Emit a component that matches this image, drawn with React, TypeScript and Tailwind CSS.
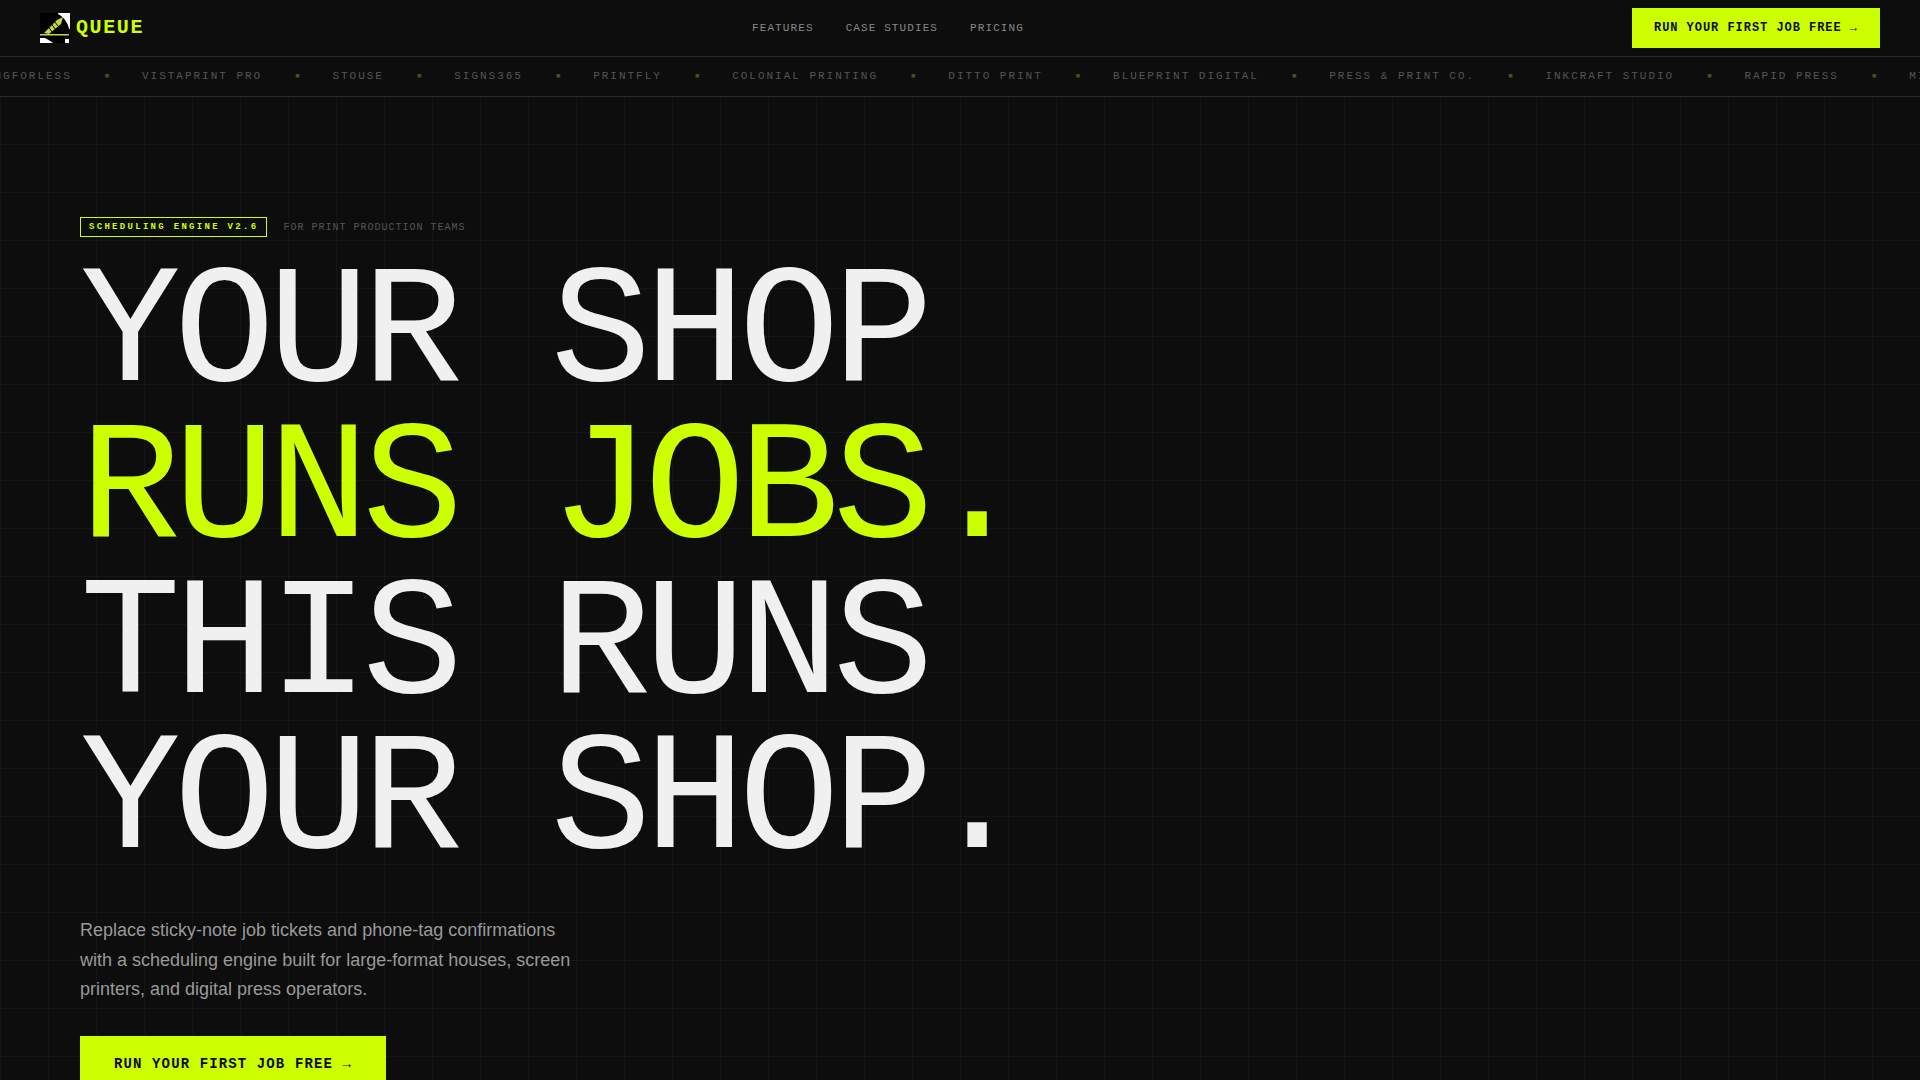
const mono = "font-['Liberation_Mono',monospace]";
const brands = ["PRINTINGFORLESS","VISTAPRINT PRO","STOUSE","SIGNS365","PRINTFLY","COLONIAL PRINTING","DITTO PRINT","BLUEPRINT DIGITAL","PRESS & PRINT CO.","INKCRAFT STUDIO","RAPID PRESS","MINUTEMAN"];

function Logo() {
  return (
    <svg width="30" height="30" viewBox="0 0 30 30" className="shrink-0">
      <rect width="30" height="30" fill="#000" />
      <path d="M18 0H30V16H29C28 10 24 4 18 1Z" fill="#fff" />
      <path d="M0 25H5C8 27 11 28 13 30H0Z" fill="#fff" />
      <rect x="25" y="26" width="4" height="4" fill="#fff" />
      <rect x="0" y="21" width="29" height="1.5" fill="#c4d83c" />
      <path d="M4 20L17 7L23 4L21 11L9 21Z" fill="#c4d83c" />
      <path d="M8 13L12 19M11 10L15 16M14 8L18 13" stroke="#000" strokeWidth="1" />
    </svg>
  );
}

export default function App() {
  return (
    <div className={`h-[1080px] overflow-hidden bg-[#0d0d0d] bg-[linear-gradient(rgba(255,255,255,0.03)_1px,transparent_1px),linear-gradient(90deg,rgba(255,255,255,0.03)_1px,transparent_1px)] bg-[size:48px_48px] ${mono}`}>
      <nav className="flex h-[57px] items-center justify-between border-b border-[#2a2a2a] bg-[#0d0d0d] px-10">
        <div className="flex items-center gap-1.5">
          <Logo />
          <span className="text-[20px] font-bold tracking-[0.08em] text-[#ccff00]">QUEUE</span>
        </div>
        <div className="flex items-center gap-8 text-[11px] tracking-[0.1em] text-[#888888]">
          <span>FEATURES</span>
          <span>CASE STUDIES</span>
          <span>PRICING</span>
        </div>
        <button className="bg-[#ccff00] px-[22px] py-3 text-[12px] leading-4 font-bold tracking-[0.08em] text-[#0d0d0d]">
          RUN YOUR FIRST JOB FREE →
        </button>
      </nav>
      <div className="flex h-[40px] items-center overflow-hidden border-b border-[#2a2a2a] bg-[#0d0d0d] pb-px whitespace-nowrap">
        <div className="-ml-[57px] flex items-center text-[11px] tracking-[0.18em] text-[#555555]">
          {brands.map((b) => (
            <div key={b} className="flex items-center">
              <span>{b}</span>
              <span className="mx-8 w-[6.3px] text-center text-[7px] tracking-normal text-[#ccff00]/30">■</span>
            </div>
          ))}
        </div>
      </div>
      <main className="px-20 pt-[120px]">
        <div className="flex items-center gap-4">
          <span className="border border-[#ccff00] px-2 py-[3px] text-[9px] leading-3 font-bold tracking-[2.3px] text-[#ccff00]">
            SCHEDULING ENGINE V2.6
          </span>
          <span className="text-[10px] tracking-[0.1em] text-[#555555]">FOR PRINT PRODUCTION TEAMS</span>
        </div>
        <h1 className="mt-[21px] text-[168px] leading-[155.8px] font-normal tracking-[-0.04em] whitespace-pre text-[#f0f0f0]">
          <div>YOUR SHOP</div>
          <div className="text-[#ccff00]">RUNS JOBS.</div>
          <div>THIS RUNS</div>
          <div>YOUR SHOP.</div>
        </h1>
        <p className="mt-[35px] w-[500px] font-['Liberation_Sans',sans-serif] text-[18px] leading-[29.4px] text-[#999999]">
          Replace sticky-note job tickets and phone-tag confirmations with a scheduling engine built for large-format houses, screen printers, and digital press operators.
        </p>
        <button className="mt-8 bg-[#ccff00] px-[34px] py-[18px] text-[14px] leading-5 font-bold tracking-[0.08em] text-[#0d0d0d]">
          RUN YOUR FIRST JOB FREE →
        </button>
      </main>
    </div>
  );
}
